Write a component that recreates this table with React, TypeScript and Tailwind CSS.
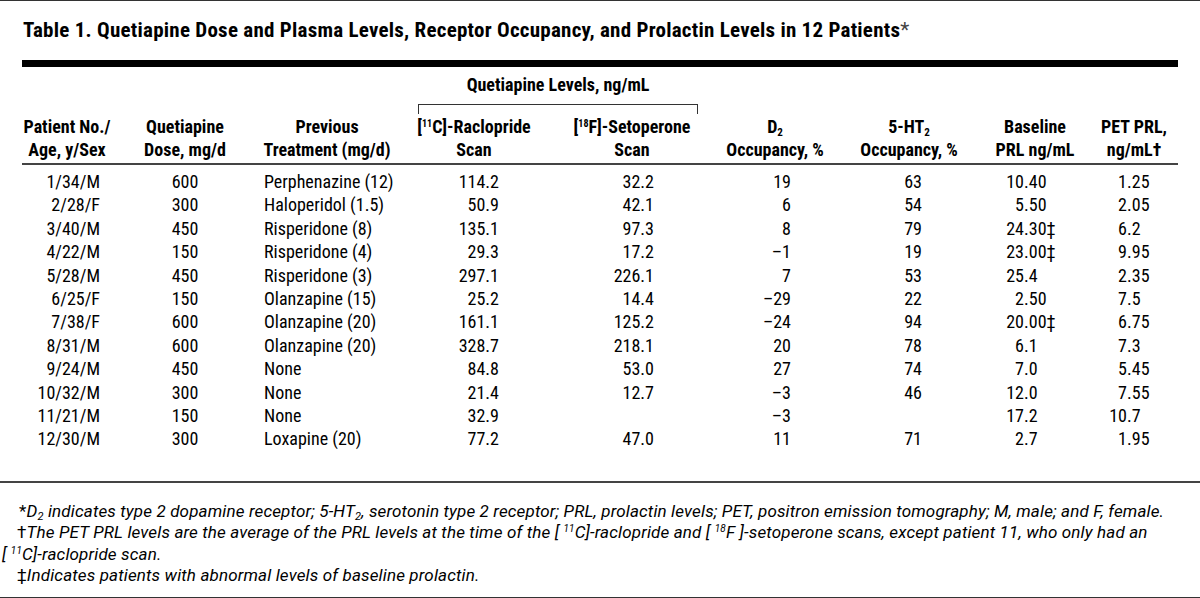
type Row = [string, string, string, string, string, string, string, string, string];

const rows: Row[] = [
  ['1/34/M', '600', 'Perphenazine (12)', '114.2', '32.2', '19', '63', '10.40', '1.25'],
  ['2/28/F', '300', 'Haloperidol (1.5)', '50.9', '42.1', '6', '54', '5.50', '2.05'],
  ['3/40/M', '450', 'Risperidone (8)', '135.1', '97.3', '8', '79', '24.30‡', '6.2'],
  ['4/22/M', '150', 'Risperidone (4)', '29.3', '17.2', '–1', '19', '23.00‡', '9.95'],
  ['5/28/M', '450', 'Risperidone (3)', '297.1', '226.1', '7', '53', '25.4', '2.35'],
  ['6/25/F', '150', 'Olanzapine (15)', '25.2', '14.4', '–29', '22', '2.50', '7.5'],
  ['7/38/F', '600', 'Olanzapine (20)', '161.1', '125.2', '–24', '94', '20.00‡', '6.75'],
  ['8/31/M', '600', 'Olanzapine (20)', '328.7', '218.1', '20', '78', '6.1', '7.3'],
  ['9/24/M', '450', 'None', '84.8', '53.0', '27', '74', '7.0', '5.45'],
  ['10/32/M', '300', 'None', '21.4', '12.7', '–3', '46', '12.0', '7.55'],
  ['11/21/M', '150', 'None', '32.9', '', '–3', '', '17.2', '10.7'],
  ['12/30/M', '300', 'Loxapine (20)', '77.2', '47.0', '11', '71', '2.7', '1.95'],
];

const cols = 'grid grid-cols-[90px_146px_138px_156px_160px_126px_142px_110px_88px]';

// integer part right-aligned up to the decimal point, rest hangs to the right
function Decimal({ value, intWidth }: { value: string; intWidth: string }) {
  const [int, frac] = value.split('.');
  return (
    <div className="flex">
      <span className={`${intWidth} text-right`}>{int}</span>
      <span>.{frac}</span>
    </div>
  );
}

function Sup({ children }: { children: React.ReactNode }) {
  return <span className="relative -top-[6px] text-[10px] leading-none">{children}</span>;
}

function Sub({ children }: { children: React.ReactNode }) {
  return <span className="relative top-[3px] text-[11px] leading-none">{children}</span>;
}

export default function App() {
  return (
    <div className="flex h-[598px] w-[1200px] flex-col border-y border-[#333] bg-white font-[Roboto,'Liberation_Sans',sans-serif] text-black">
      {/* Title */}
      <div className="h-[41px] pl-[23px] pt-[17px]">
        <h1 className="text-[21px] font-bold leading-[24px] tracking-[0.25px] [font-stretch:80%]">
          Table 1. Quetiapine Dose and Plasma Levels, Receptor Occupancy, and Prolactin Levels in 12 Patients
          <span className="font-normal text-[#444]">*</span>
        </h1>
      </div>

      <div className="ml-[22px] w-[1156px]">
        <div className="mt-[18px] h-[7px] bg-black" />

        {/* Column headers */}
        <div className="text-[18px] font-bold leading-[23px] [font-stretch:80%]">
          <div className="ml-[396px] w-[280px]">
            <div className="mt-[6px] h-[23px] text-center">Quetiapine Levels, ng/mL</div>
            <div className="mt-[8px] h-[10px] border-x border-t border-[#333]" />
          </div>
          <div className={`${cols} mt-[1px] whitespace-nowrap text-center`}>
            <div>Patient No./<br />Age, y/Sex</div>
            <div>Quetiapine<br />Dose, mg/d</div>
            <div>Previous<br />Treatment (mg/d)</div>
            <div>[<Sup>11</Sup>C]-Raclopride<br />Scan</div>
            <div>[<Sup>18</Sup>F]-Setoperone<br />Scan</div>
            <div>D<Sub>2</Sub><br />Occupancy, %</div>
            <div>5-HT<Sub>2</Sub><br />Occupancy, %</div>
            <div>Baseline<br />PRL ng/mL</div>
            <div>PET PRL,<br />ng/mL†</div>
          </div>
        </div>
        <div className="mt-[2px] h-[2px] bg-[#444]" />

        {/* Rows */}
        <div className="mt-[5px] text-[18px] leading-[23.4px] [font-stretch:87%]">
          {rows.map((r) => (
            <div key={r[0]} className={`${cols} h-[23.4px] whitespace-nowrap`}>
              <div className="pr-[12px] text-right">{r[0]}</div>
              <div className="text-center">{r[1]}</div>
              <div className="pl-[6px]">{r[2]}</div>
              <div className="pr-[53px] text-right">{r[3]}</div>
              <div className="pr-[58px] text-right">{r[4]}</div>
              <div className="pr-[47px] text-right">{r[5]}</div>
              <div className="pr-[58px] text-right">{r[6]}</div>
              <Decimal value={r[7]} intWidth="w-[44px]" />
              <Decimal value={r[8]} intWidth="w-[37px]" />
            </div>
          ))}
        </div>
      </div>

      <div className="mt-[30px] h-[2px] bg-[#444]" />

      {/* Footnotes */}
      <div className="mt-[18px] whitespace-nowrap pl-[2px] text-[17px] italic leading-[21.5px] tracking-[0.15px] [font-stretch:100%]">
        <p className="indent-[17px]">
          <span className="not-italic">*</span>D<Sub>2</Sub> indicates type 2 dopamine receptor; 5-HT<Sub>2</Sub>, serotonin type 2 receptor; PRL, prolactin levels; PET, positron emission tomography; M, male; and F, female.
        </p>
        <p className="indent-[15px]">
          <span className="not-italic">†</span>The PET PRL levels are the average of the PRL levels at the time of the [ <Sup>11</Sup>C]-raclopride and [ <Sup>18</Sup>F ]-setoperone scans, except patient 11, who only had an
          <br />[ <Sup>11</Sup>C]-raclopride scan.
        </p>
        <p className="indent-[15px]">
          <span className="not-italic">‡</span>Indicates patients with abnormal levels of baseline prolactin.
        </p>
      </div>
    </div>
  );
}
